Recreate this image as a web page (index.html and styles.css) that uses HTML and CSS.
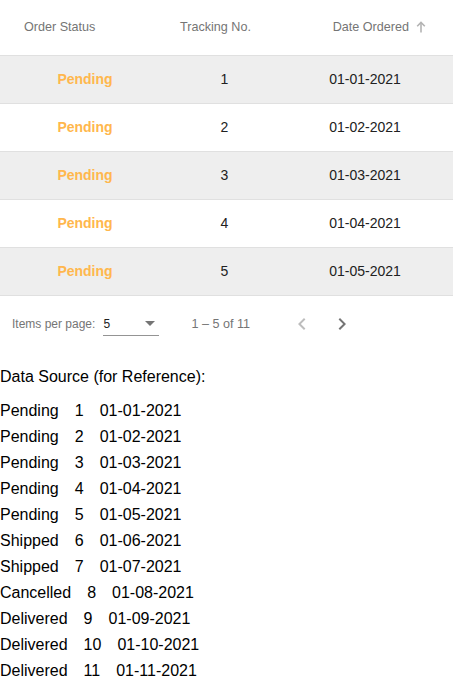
FILE: index.html
```html
<!DOCTYPE html>
<html lang="en">
<head>
<meta charset="utf-8">
<title>Orders</title>
<link rel="stylesheet" href="styles.css">
</head>
<body>
<div class="page">
  <div class="orders">
    <div class="row head">
      <div class="cell c1">Order Status</div>
      <div class="cell c2"><span>Tracking No.</span><span class="sort-space"></span></div>
      <div class="cell c3"><span>Date Ordered</span>
        <svg class="sort-arrow" width="12" height="12" viewBox="0 0 12 12"><path d="M6 1.5V11.5" stroke="#b3b3b3" stroke-width="1.6" fill="none"/><path d="M2.2 5.3L6 1.5L9.8 5.3" stroke="#b3b3b3" stroke-width="1.6" fill="none"/></svg>
      </div>
    </div>
    <div class="row alt">
      <div class="cell c1 status">Pending</div><div class="cell c2">1</div><div class="cell c3">01-01-2021</div>
    </div>
    <div class="row">
      <div class="cell c1 status">Pending</div><div class="cell c2">2</div><div class="cell c3">01-02-2021</div>
    </div>
    <div class="row alt">
      <div class="cell c1 status">Pending</div><div class="cell c2">3</div><div class="cell c3">01-03-2021</div>
    </div>
    <div class="row">
      <div class="cell c1 status">Pending</div><div class="cell c2">4</div><div class="cell c3">01-04-2021</div>
    </div>
    <div class="row alt">
      <div class="cell c1 status">Pending</div><div class="cell c2">5</div><div class="cell c3">01-05-2021</div>
    </div>
  </div>

  <div class="paginator">
    <div class="page-size-label">Items per page:</div>
    <div class="select">
      <span class="select-value">5</span>
      <span class="select-arrow"></span>
    </div>
    <div class="range">1 – 5 of 11</div>
    <button class="nav-btn disabled" aria-label="Previous page">
      <svg width="24" height="24" viewBox="0 0 24 24"><path d="M15.41 7.41L14 6l-6 6 6 6 1.41-1.41L10.83 12z" fill="currentColor"/></svg>
    </button>
    <button class="nav-btn" aria-label="Next page">
      <svg width="24" height="24" viewBox="0 0 24 24"><path d="M10 6L8.59 7.41 13.17 12l-4.58 4.59L10 18l6-6z" fill="currentColor"/></svg>
    </button>
  </div>

  <p class="ds-title">Data Source (for Reference):</p>
  <div class="ds-list">
    <div class="ds-item"><span>Pending</span><span>1</span><span>01-01-2021</span></div>
    <div class="ds-item"><span>Pending</span><span>2</span><span>01-02-2021</span></div>
    <div class="ds-item"><span>Pending</span><span>3</span><span>01-03-2021</span></div>
    <div class="ds-item"><span>Pending</span><span>4</span><span>01-04-2021</span></div>
    <div class="ds-item"><span>Pending</span><span>5</span><span>01-05-2021</span></div>
    <div class="ds-item"><span>Shipped</span><span>6</span><span>01-06-2021</span></div>
    <div class="ds-item"><span>Shipped</span><span>7</span><span>01-07-2021</span></div>
    <div class="ds-item"><span>Cancelled</span><span>8</span><span>01-08-2021</span></div>
    <div class="ds-item"><span>Delivered</span><span>9</span><span>01-09-2021</span></div>
    <div class="ds-item"><span>Delivered</span><span>10</span><span>01-10-2021</span></div>
    <div class="ds-item"><span>Delivered</span><span>11</span><span>01-11-2021</span></div>
  </div>
</div>
</body>
</html>
```

FILE: styles.css
```css
html, body {
  margin: 0;
  padding: 0;
  overflow: hidden;
  background: #ffffff;
}

body {
  font-family: "Liberation Sans", Arial, sans-serif;
  color: #000000;
}

.page {
  width: 453px;
}

.orders {
  display: flex;
  flex-direction: column;
}

.row {
  display: grid;
  grid-template-columns: 146px 157px 150px;
  height: 48px;
  box-sizing: border-box;
  border-bottom: 1px solid #e0e0e0;
  font-size: 14px;
  color: #212121;
}

.row.alt {
  background: #eeeeee;
}

.row.head {
  height: 56px;
  font-size: 12.6px;
  color: #757575;
  background: #ffffff;
}

.cell {
  display: flex;
  align-items: center;
  justify-content: center;
  box-sizing: border-box;
  white-space: nowrap;
  padding-bottom: 2px;
}

.head .cell {
  padding-bottom: 1px;
}

.c1 {
  padding-left: 24px;
}

.c3 {
  padding-right: 26px;
}

.head .c1 {
  justify-content: flex-start;
}

.head .c3 {
  justify-content: flex-end;
}

.sort-space {
  width: 18px;
  height: 12px;
}

.sort-arrow {
  margin-left: 6px;
  display: block;
}

.status {
  font-weight: bold;
  color: #ffb74d;
}

.paginator {
  display: flex;
  align-items: center;
  height: 56px;
  padding: 0 8px;
  font-size: 12px;
  color: #757575;
}

.page-size-label {
  margin: 0 4px;
}

.select {
  width: 56px;
  height: 24px;
  box-sizing: border-box;
  margin: 0 4px;
  border-bottom: 1px solid #949494;
  display: flex;
  align-items: center;
  justify-content: space-between;
}

.select-value {
  color: #212121;
}

.select-arrow {
  width: 0;
  height: 0;
  margin: 0 4px;
  border-left: 5px solid transparent;
  border-right: 5px solid transparent;
  border-top: 5px solid #757575;
}

.range {
  margin: 0 32px 0 28px;
  font-size: 12.6px;
}

.nav-btn {
  width: 40px;
  height: 40px;
  padding: 0;
  margin: 0;
  border: none;
  background: transparent;
  display: flex;
  align-items: center;
  justify-content: center;
  color: #757575;
}

.nav-btn.disabled {
  color: #bdbdbd;
}

.nav-btn svg {
  display: block;
}

.ds-title {
  margin: 16px 0 0;
  font-size: 16px;
  line-height: 18px;
}

.ds-list {
  margin-top: 12px;
  font-size: 16px;
}

.ds-item {
  display: flex;
  gap: 16px;
  line-height: 26px;
}
```
